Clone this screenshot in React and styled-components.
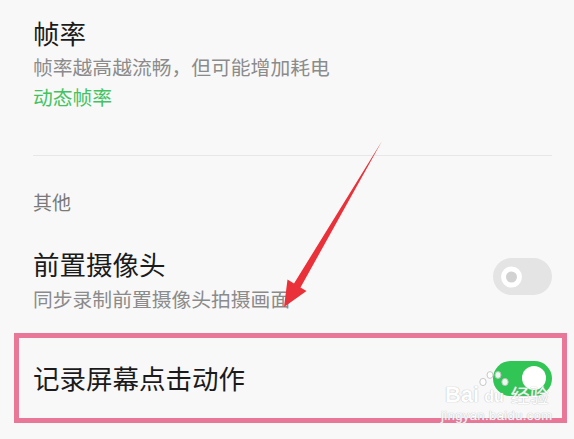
import React from "react";
import styled, { createGlobalStyle } from "styled-components";

const GlobalStyle = createGlobalStyle`
  html, body {
    margin: 0;
    padding: 0;
    background: #f8f8f8;
  }
  body {
    font-family: "Noto Sans CJK SC", "Noto Sans", sans-serif;
  }
`;

const Page = styled.div`
  position: relative;
  width: 574px;
  height: 439px;
  overflow: hidden;
  background: #f8f8f8;
  box-sizing: border-box;
  padding: 16px 0 0;
`;

const Block = styled.div`
  padding: 0 22px 0 33px;
`;

const Title = styled.div`
  font-size: 26.5px;
  line-height: 34px;
  color: #1b1b1b;
`;

const Desc = styled.div`
  font-size: 19.8px;
  line-height: 30px;
  margin-top: ${(p) => p.$top || 0}px;
  color: ${(p) => (p.$green ? "#43c35f" : "#8b8b8b")};
`;

const Divider = styled.div`
  height: 1px;
  background: #e7e7e7;
  margin: 43px 22px 0 33px;
`;

const SectionLabel = styled.div`
  font-size: 19px;
  line-height: 30px;
  color: #7a7a7a;
  padding-left: 33px;
  margin-top: 31px;
`;

const Row = styled.div`
  display: flex;
  align-items: flex-start;
  justify-content: space-between;
  padding: 0 22px 0 33px;
  margin-top: 30px;
`;

const Texts = styled.div`
  display: flex;
  flex-direction: column;
`;

const Toggle = styled.div`
  position: relative;
  width: 59px;
  height: ${(p) => (p.$on ? 35 : 37)}px;
  border-radius: 20px;
  margin-top: ${(p) => p.$top || 0}px;
  background: ${(p) => (p.$on ? "#30c555" : "#e4e4e4")};
  flex-shrink: 0;
`;

const Knob = styled.div`
  position: absolute;
  top: 50%;
  transform: translateY(-50%);
  box-sizing: border-box;
  border-radius: 50%;
  ${(p) =>
    p.$on
      ? `right: 6px; width: 24px; height: 24px; background: #ffffff;`
      : `left: 8px; width: 21px; height: 21px; background: #d2d2d2; border: 5px solid #ffffff;`}
`;

const Highlight = styled.div`
  margin: 19px 7px 0 14px;
  height: 90px;
  box-sizing: border-box;
  border: 5px solid #e97898;
  display: flex;
  align-items: center;
  justify-content: space-between;
  padding: 0 10px 0 14px;
`;

const Arrow = styled.svg`
  position: absolute;
  left: 0;
  top: 0;
  pointer-events: none;
`;

const Watermark = styled.div`
  position: absolute;
  left: 441px;
  top: 383px;
  color: #ffffff;
  text-shadow: 0 0 1px #bdbdbd, 0 0 1px #bdbdbd;
  font-family: "Liberation Sans", sans-serif;
  display: flex;
  flex-direction: column;
  align-items: center;
  opacity: 0.9;
`;

const MarkLine = styled.div`
  display: flex;
  align-items: flex-end;
  font-size: 22px;
  font-weight: bold;
  line-height: 24px;
`;

const Paw = styled.div`
  position: relative;
  font-size: 16px;
  line-height: 20px;
  padding: 0 3px;
  margin: 0 2px;
  svg {
    position: absolute;
    left: -3px;
    top: -17px;
  }
`;

const MarkCn = styled.span`
  font-family: "Noto Sans CJK SC", sans-serif;
  font-weight: normal;
  font-size: 19px;
  margin-left: 2px;
`;

const MarkUrl = styled.div`
  font-size: 13px;
  line-height: 17px;
  letter-spacing: 0.4px;
`;

export default function App() {
  return (
    <>
      <GlobalStyle />
      <Page>
        <Block>
          <Title>帧率</Title>
          <Desc $top={2}>帧率越高越流畅，但可能增加耗电</Desc>
          <Desc $green>动态帧率</Desc>
        </Block>
        <Divider />
        <SectionLabel>其他</SectionLabel>
        <Row>
          <Texts>
            <Title>前置摄像头</Title>
            <Desc $top={3}>同步录制前置摄像头拍摄画面</Desc>
          </Texts>
          <Toggle $top={11}>
            <Knob />
          </Toggle>
        </Row>
        <Highlight>
          <Title>记录屏幕点击动作</Title>
          <Toggle $on>
            <Knob $on />
          </Toggle>
        </Highlight>

        <Watermark>
          <MarkLine>
            Bai
            <Paw>
              <svg width="32" height="18" viewBox="0 0 32 18">
                <g fill="#fff" stroke="#c4c4c4" strokeWidth="1">
                  <ellipse cx="5" cy="12" rx="3.2" ry="3.6" />
                  <ellipse cx="12" cy="5" rx="3" ry="3.4" />
                  <ellipse cx="20" cy="5" rx="3" ry="3.4" />
                  <ellipse cx="27" cy="12" rx="3.2" ry="3.6" />
                </g>
              </svg>
              du
            </Paw>
            <MarkCn>经验</MarkCn>
          </MarkLine>
          <MarkUrl>jingyan.baidu.com</MarkUrl>
        </Watermark>

        <Arrow width="574" height="439" viewBox="0 0 574 439">
          <polygon
            points="382,141 300.5,287.5 306.5,291 284,307 287.5,279.5 294,283.5"
            fill="#ea3038"
          />
        </Arrow>
      </Page>
    </>
  );
}
